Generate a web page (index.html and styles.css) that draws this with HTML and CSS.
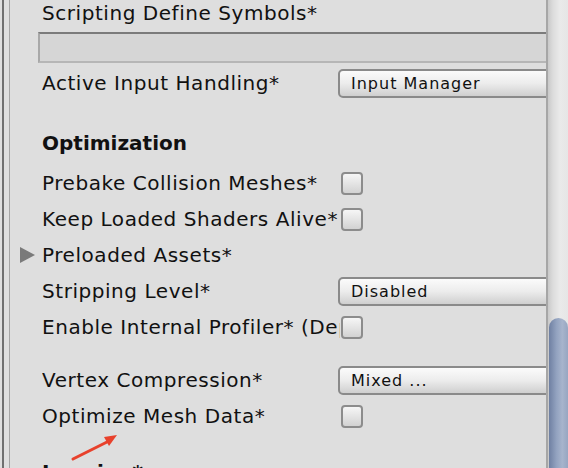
FILE: index.html
```html
<!DOCTYPE html>
<html>
<head>
<meta charset="utf-8">
<link rel="stylesheet" href="styles.css">
</head>
<body>
<div class="window">
  <div class="gutter"><div class="gutter-line"></div></div>
  <div class="content">
    <div class="row row-first"><span class="label">Scripting Define Symbols*</span></div>
    <div class="textfield"></div>
    <div class="row"><span class="label">Active Input Handling*</span><div class="dropdown">Input Manager</div></div>
    <div class="row row-header"><span class="label bold">Optimization</span></div>
    <div class="row"><span class="label">Prebake Collision Meshes*</span><div class="checkbox"></div></div>
    <div class="row"><span class="label">Keep Loaded Shaders Alive*</span><div class="checkbox"></div></div>
    <div class="row"><span class="foldout"></span><span class="label">Preloaded Assets*</span></div>
    <div class="row"><span class="label">Stripping Level*</span><div class="dropdown">Disabled</div></div>
    <div class="row"><span class="label">Enable Internal Profiler* (Deprecated)</span><div class="checkbox"></div></div>
    <div class="row row-gap"><span class="label">Vertex Compression*</span><div class="dropdown">Mixed ...</div></div>
    <div class="row"><span class="label">Optimize Mesh Data*</span><div class="checkbox"></div></div>
    <div class="row row-last"><span class="label bold">Logging*</span></div>
    <svg class="arrow" width="60" height="40" viewBox="0 0 60 40">
      <path d="M4 34 L40 16" stroke="#e8412c" stroke-width="3" stroke-linecap="round" fill="none"/>
      <path d="M48 10 L35 12 L40 21 Z" fill="#e8412c"/>
    </svg>
  </div>
  <div class="scrollbar"><div class="thumb"></div></div>
</div>
</body>
</html>
```
FILE: styles.css
```css
html, body {
  margin: 0;
  padding: 0;
  width: 568px;
  height: 468px;
  overflow: hidden;
  background: #dedede;
}
.window {
  display: flex;
  width: 568px;
  height: 468px;
  font-family: "DejaVu Sans", "Liberation Sans", sans-serif;
  color: #111;
}
.gutter {
  width: 12px;
  flex: none;
  border-left: 2px solid #dedede;
  box-sizing: border-box;
  display: flex;
}
.gutter-line {
  width: 8px;
  border-left: 2px solid #6f6f6f;
  border-right: 1px solid #a4a4a4;
  box-sizing: border-box;
}
.content {
  position: relative;
  flex: 1;
  overflow: hidden;
  padding-left: 30px;
  box-sizing: border-box;
}
.row {
  display: flex;
  align-items: center;
  height: 36px;
  white-space: nowrap;
}
.row-first { height: 26px; }
.row-header { margin-top: 24px; margin-bottom: 4px; }
.row-gap { margin-top: 17px; }
.row-last { margin-top: 20px; }
.label {
  width: 298px;
  flex: none;
  overflow: hidden;
  font-size: 20px;
  letter-spacing: 0.55px;
}
.bold {
  font-weight: bold;
  letter-spacing: 0;
}
.textfield {
  margin: 6px 0 2px -4px;
  height: 31px;
  box-sizing: border-box;
  background: #d6d6d6;
  border-top: 2px solid #7b7b7b;
  border-left: 2px solid #a8a8a8;
  border-bottom: 2px solid #b6b6b6;
}
.dropdown {
  flex: none;
  margin-left: -2px;
  width: 230px;
  height: 29px;
  box-sizing: border-box;
  border: 2px solid #8a8a8a;
  border-radius: 5px;
  background: linear-gradient(#fbfbfb, #ececec 50%, #cfcfcf);
  font-size: 16px;
  letter-spacing: 1px;
  line-height: 25px;
  padding-left: 11px;
}
.checkbox {
  flex: none;
  margin-left: 1px;
  width: 22px;
  height: 23px;
  box-sizing: border-box;
  border: 2px solid #8c8c8c;
  border-radius: 4px;
  background: linear-gradient(#f6f6f6, #d2d2d2);
}
.foldout {
  margin-left: -22px;
  margin-right: 7px;
  width: 0;
  height: 0;
  border-top: 8px solid transparent;
  border-bottom: 8px solid transparent;
  border-left: 15px solid #7a7a7a;
}
.arrow {
  position: absolute;
  left: 57px;
  top: 425px;
}
.scrollbar {
  position: relative;
  width: 22px;
  flex: none;
  border-left: 2px solid #a6a6a6;
  box-sizing: border-box;
  background: linear-gradient(to right, #c9c9c9, #dcdcdc 25%, #eaeaea 60%, #e6e6e6);
}
.thumb {
  position: absolute;
  left: 1px;
  right: 0;
  top: 318px;
  bottom: -10px;
  border-radius: 10px 10px 0 0;
  background: linear-gradient(to right, #6f80a2, #93a3c0 40%, #a7b4cc 70%, #97a6c1);
}
```
